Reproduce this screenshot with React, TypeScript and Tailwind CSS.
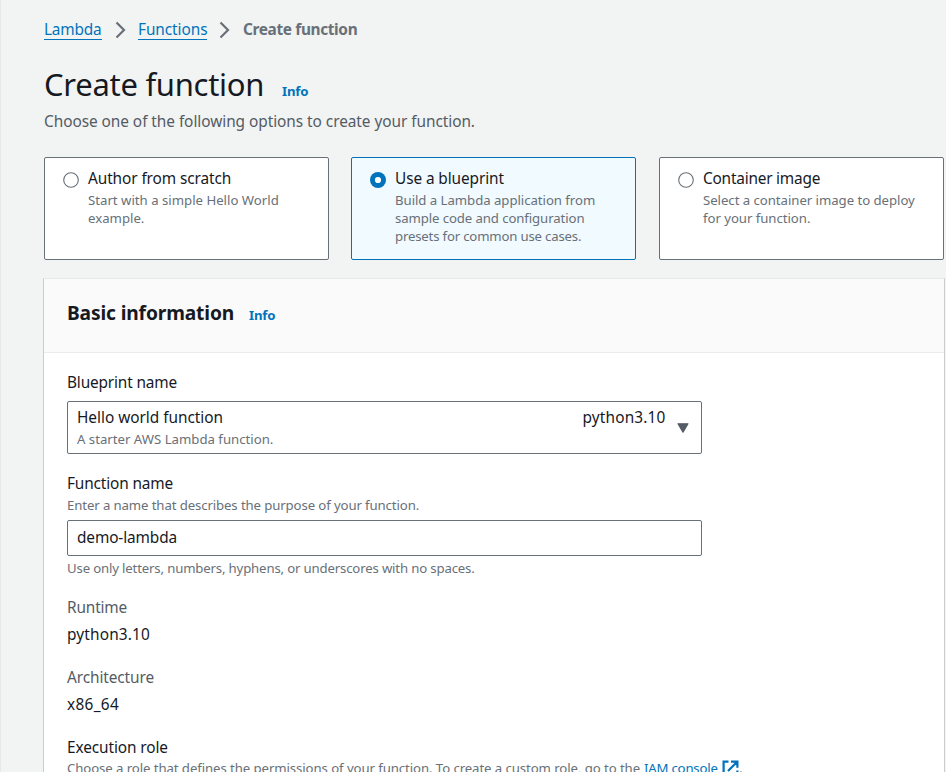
import type { ReactNode } from "react";

function Chevron() {
  return (
    <svg width="12" height="18" viewBox="0 0 12 18" fill="none" className="mt-[3px] shrink-0">
      <path d="M1.5 1.5 9 9l-7.5 7.5" stroke="#687078" strokeWidth="2.2" />
    </svg>
  );
}

function Radio({ checked }: { checked?: boolean }) {
  return (
    <svg width="16" height="16" viewBox="0 0 16 16" className="mt-[5px] shrink-0">
      {checked ? (
        <>
          <circle cx="8" cy="8" r="8" fill="#0073bb" />
          <circle cx="8" cy="8" r="3.1" fill="#fff" />
        </>
      ) : (
        <circle cx="8" cy="8" r="7.3" fill="#fff" stroke="#687078" strokeWidth="1.1" />
      )}
    </svg>
  );
}

function Tile({ label, checked, children }: { label: ReactNode; checked?: boolean; children: ReactNode }) {
  return (
    <div
      className={
        checked
          ? "flex h-[103px] w-[285px] shrink-0 items-start gap-[9px] rounded-[2px] border border-[#0073bb] bg-[#f1faff] pt-[9px] pl-[18px]"
          : "flex h-[103px] w-[285px] shrink-0 items-start gap-[9px] rounded-[2px] border border-[#687078] bg-white pt-[9px] pl-[18px]"
      }
    >
      <Radio checked={checked} />
      <div>
        <div className="text-[15.4px] leading-[24px] whitespace-nowrap">{label}</div>
        <div className="text-[13.2px] leading-[18px] whitespace-nowrap text-[#687078]">{children}</div>
      </div>
    </div>
  );
}

export default function App() {
  return (
    <div className="h-[772px] w-[946px] overflow-hidden border-l border-[#e6e9e9] bg-[#f2f3f3] pl-[43px] font-['Noto_Sans',sans-serif] text-[15.4px] leading-[24px] whitespace-nowrap text-[#16191f]">
      <nav className="flex h-[40px] items-start pt-[18px]">
        <a className="mr-[13px] h-[22px] w-[58px] border-b border-[#0073bb] tracking-[-0.19px] text-[#0073bb]">Lambda</a>
        <Chevron />
        <a className="mr-[12px] ml-[11px] h-[22px] w-[69px] border-b border-[#0073bb] tracking-[-0.07px] text-[#0073bb]">Functions</a>
        <Chevron />
        <span className="ml-[12px] font-bold tracking-[-0.35px] text-[#687078]">Create function</span>
      </nav>

      <header className="pt-[24px]">
        <div className="flex h-[40px] items-baseline">
          <h1 className="w-[238px] text-[31px] leading-[41px] tracking-[-0.28px]">Create function</h1>
          <a className="text-[13.2px] leading-[18px] font-bold tracking-[-0.2px] text-[#0073bb]">Info</a>
        </div>
        <p className="mt-[6px] tracking-[-0.05px] text-[#545b64]">
          Choose one of the following options to create your function.
        </p>
      </header>

      <div className="mt-[23px] flex">
        <Tile label={<span className="tracking-[-0.1px]">Author from scratch</span>}>
          Start with a simple Hello World
          <br />
          example.
        </Tile>
        <div className="w-[22px] shrink-0" />
        <Tile checked label={<span className="tracking-[-0.1px]">Use a blueprint</span>}>
          <div className="tracking-[-0.04px]">Build a Lambda application from</div>
          <div className="tracking-[-0.1px]">sample code and configuration</div>
          <div className="tracking-[-0.18px]">presets for common use cases.</div>
        </Tile>
        <div className="w-[23px] shrink-0" />
        <Tile label={<span className="tracking-[-0.22px]">Container image</span>}>
          <span className="tracking-[-0.04px]">
            Select a container image to deploy
            <br />
            for your function.
          </span>
        </Tile>
      </div>

      <section className="mt-[18px] -ml-px h-[520px] w-[902px] border-x border-t border-x-[#c9cdcf] border-t-[#e6e9e9] bg-white">
        <div className="flex h-[74px] items-baseline border-b border-[#eaeded] bg-[#fafafa] pt-[21px] pl-[23px]">
          <h2 className="w-[182px] text-[19.2px] leading-[26px] font-bold tracking-[-0.14px]">Basic information</h2>
          <a className="text-[13.2px] leading-[18px] font-bold tracking-[-0.2px] text-[#0073bb]">Info</a>
        </div>

        <div className="pt-[18px] pl-[23px]">
          <div className="tracking-[-0.16px]">Blueprint name</div>
          <div className="mt-[6px] flex h-[53px] w-[635px] items-start rounded-[2px] border border-[#687078] bg-white pt-[4px] pl-[9px]">
            <div className="w-[505.5px]">
              <div className="tracking-[-0.03px]">Hello world function</div>
              <div className="text-[13.2px] leading-[18px] text-[#687078]">A starter AWS Lambda function.</div>
            </div>
            <div className="w-[94px] tracking-[0.16px]">python3.10</div>
            <svg width="12" height="10" viewBox="0 0 12 10" className="mt-[17px]">
              <path d="M1 .8h10L6 9.2z" fill="#545b64" stroke="#545b64" strokeWidth="1.2" strokeLinejoin="round" />
            </svg>
          </div>

          <div className="mt-[18px] tracking-[-0.15px]">Function name</div>
          <div className="text-[13.2px] leading-[18px] tracking-[-0.11px] text-[#687078]">
            Enter a name that describes the purpose of your function.
          </div>
          <div className="mt-[6px] h-[36px] w-[635px] rounded-[2px] border border-[#687078] bg-white pt-[5px] pl-[9px] tracking-[-0.12px]">
            demo-lambda
          </div>
          <div className="mt-[3px] text-[13.2px] leading-[18px] tracking-[-0.16px] text-[#687078]">
            Use only letters, numbers, hyphens, or underscores with no spaces.
          </div>

          <div className="mt-[19px] tracking-[-0.15px] text-[#545b64]">Runtime</div>
          <div className="mt-[3px] tracking-[0.16px]">python3.10</div>

          <div className="mt-[19px] tracking-[-0.1px] text-[#545b64]">Architecture</div>
          <div className="mt-[3px] tracking-[0.3px]">x86_64</div>

          <div className="mt-[19px] tracking-[-0.1px]">Execution role</div>
          <div className="-mt-px flex text-[13.2px] leading-[18px] text-[#687078]">
            <span className="w-[577px] tracking-[-0.08px]">
              Choose a role that defines the permissions of your function. To create a custom role, go to the
            </span>
            <span className="w-[78px] tracking-[-0.2px] text-[#0073bb]">IAM console</span>
            <svg width="17" height="17" viewBox="0 0 17 17" fill="none" stroke="#0073bb" strokeWidth="2.2" className="mt-px">
              <path d="M6.5 1.6H1.6v13.8h13.8v-4.9M9 1.6h6.4v6.2M15.2 1.8 6 11" />
            </svg>
            <span>.</span>
          </div>
        </div>
      </section>
    </div>
  );
}
